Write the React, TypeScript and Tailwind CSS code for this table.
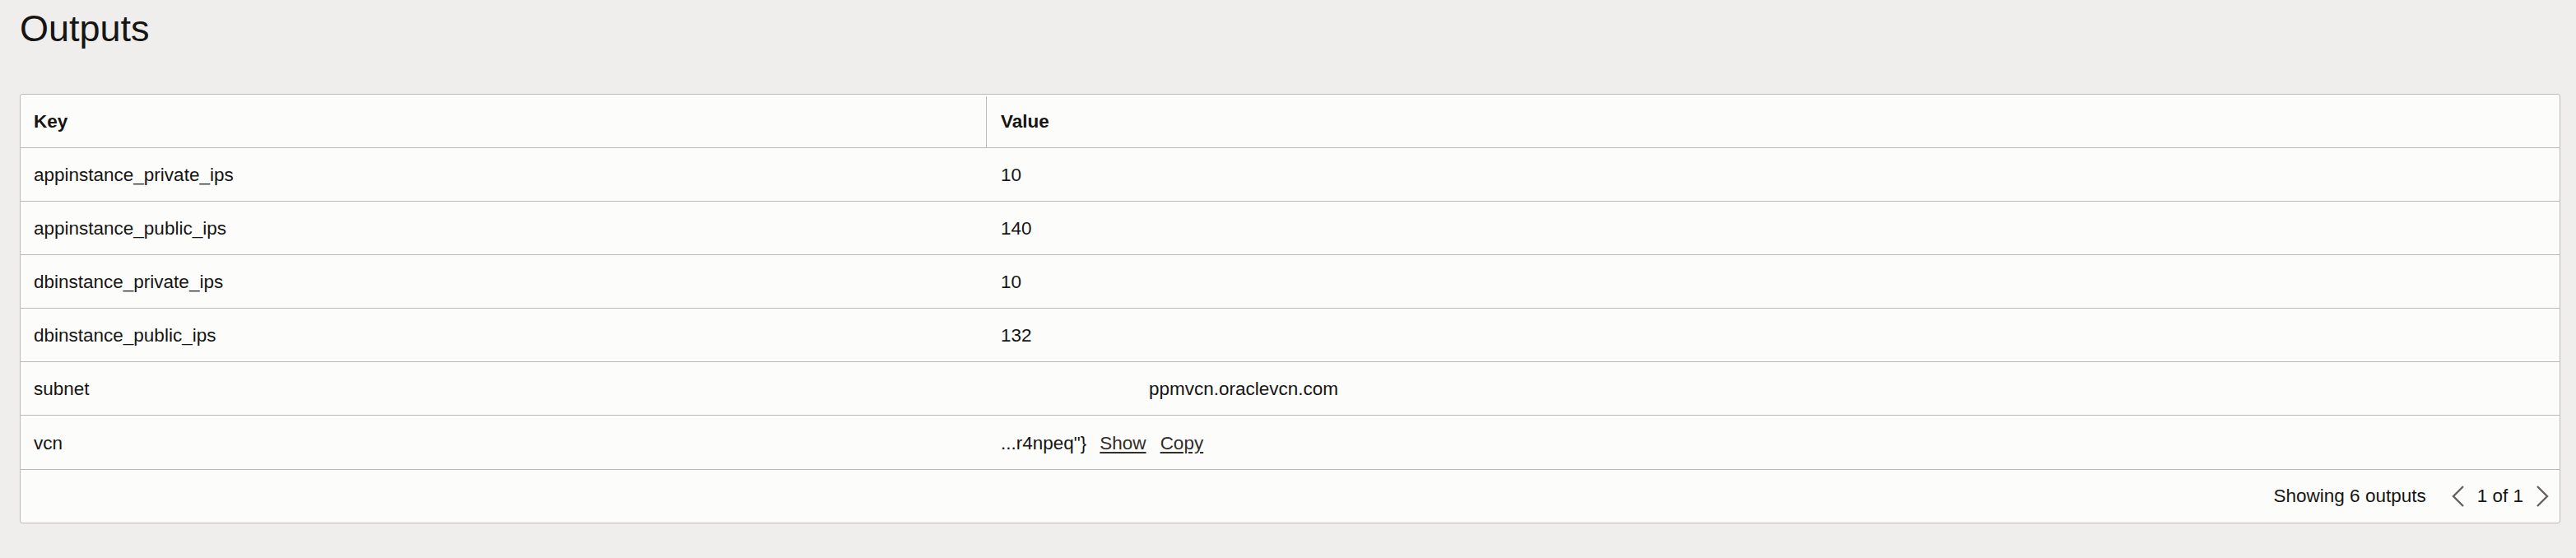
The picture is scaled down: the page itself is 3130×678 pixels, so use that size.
import React from "react"

const rows = [
    { key: "appinstance_private_ips", value: "10" },
    { key: "appinstance_public_ips", value: "140" },
    { key: "dbinstance_private_ips", value: "10" },
    { key: "dbinstance_public_ips", value: "132" },
    { key: "subnet", value: "ppmvcn.oraclevcn.com", indent: true },
]

function Chevron({ dir }: { dir: "left" | "right" }) {
    return (
        <svg width="16" height="26" viewBox="0 0 16 26" className="block">
            <polyline
                points={dir === "left" ? "14,1 2,13 14,25" : "2,1 14,13 2,25"}
                fill="none"
                stroke="#66615d"
                strokeWidth="2.4"
            />
        </svg>
    )
}

export default function App() {
    return (
        <main className="min-h-screen w-full bg-[#f0eeec] pl-[24px] pr-[19px] pt-[9px] font-['Liberation_Sans',Arial,sans-serif] text-[#161513]">
            <h1 className="text-[45px] leading-[51px]">Outputs</h1>

            <section className="mt-[54px] overflow-hidden rounded-[3px] border border-[#bdb9b5] bg-[#fcfcfb] text-[22.5px]">
                <div className="grid h-[65px] grid-cols-[1174px_1fr] border-b border-[#bdb9b5] pt-[2px] font-bold">
                    <div className="flex items-center border-r border-[#bdb9b5] pl-[16px]">
                        Key
                    </div>
                    <div className="flex items-center pl-[17px]">Value</div>
                </div>

                {rows.map((row) => (
                    <div
                        key={row.key}
                        className="grid h-[65px] grid-cols-[1174px_1fr] border-b border-[#bdb9b5] pt-[2px]"
                    >
                        <div className="flex items-center pl-[16px]">
                            {row.key}
                        </div>
                        <div
                            className={
                                row.indent
                                    ? "flex items-center pl-[197px]"
                                    : "flex items-center pl-[17px]"
                            }
                        >
                            {row.value}
                        </div>
                    </div>
                ))}

                <div className="grid h-[66px] grid-cols-[1174px_1fr] border-b border-[#bdb9b5] pt-[2px]">
                    <div className="flex items-center pl-[16px]">vcn</div>
                    <div className="flex items-center pl-[17px]">
                        <span>...r4npeq"{"}"}</span>
                        <a className="ml-[16px] cursor-pointer text-[#312d2a] underline underline-offset-[3px]">
                            Show
                        </a>
                        <a className="ml-[17px] cursor-pointer text-[#312d2a] underline underline-offset-[3px]">
                            Copy
                        </a>
                    </div>
                </div>

                <div className="flex h-[64px] items-center justify-end pr-[13px]">
                    <span>Showing 6 outputs</span>
                    <button className="ml-[31px]">
                        <Chevron dir="left" />
                    </button>
                    <span className="mx-[15px]">1 of 1</span>
                    <button>
                        <Chevron dir="right" />
                    </button>
                </div>
            </section>
        </main>
    )
}
